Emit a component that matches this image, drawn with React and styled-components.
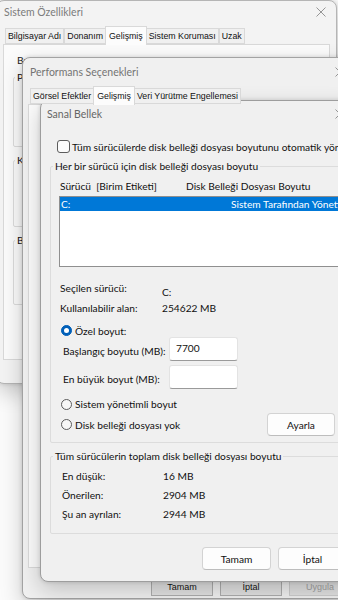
import React from "react";
import styled, { createGlobalStyle } from "styled-components";

const Global = createGlobalStyle`
  html, body { margin: 0; padding: 0; background: #fbfbfb; }
  #root { width: 338px; height: 600px; }
  * { box-sizing: border-box; }
`;

const Desktop = styled.div`
  position: relative;
  width: 338px;
  height: 600px;
  overflow: hidden;
  background: #fbfbfb;
  font-family: "Lato", "Noto Sans", sans-serif;
  font-size: 10.2px;
  color: #111111;
`;

const Window = styled.div`
  position: absolute;
  left: ${(p) => p.$x}px;
  top: ${(p) => p.$y}px;
  width: ${(p) => p.$w}px;
  height: ${(p) => p.$h}px;
  background: ${(p) => p.$bg || "#f0f0f0"};
  border: 1px solid ${(p) => p.$border || "#a9a9a9"};
  border-radius: 8px;
  box-shadow: 0 8px 22px rgba(0, 0, 0, 0.2), 0 0 4px rgba(0, 0, 0, 0.14);
  display: flex;
  flex-direction: column;
  overflow: hidden;
`;

const TitleBar = styled.div`
  flex: none;
  height: ${(p) => p.$h}px;
  display: flex;
  align-items: center;
  justify-content: space-between;
  padding-left: ${(p) => p.$pad}px;
  color: ${(p) => p.$color || "#6f6f6f"};
  font-size: 10.5px;
  line-height: 14px;
`;

const CloseBtn = styled.div`
  width: 30px;
  height: 100%;
  display: flex;
  align-items: center;
  justify-content: center;
  color: #8a8a8a;
`;

const CloseIcon = () => (
  <svg width="10" height="10" viewBox="0 0 10 10">
    <path d="M0.5 0.5 L9.5 9.5 M9.5 0.5 L0.5 9.5" stroke="currentColor" strokeWidth="0.9" fill="none" />
  </svg>
);

/* classic tabs */
const TabStrip = styled.div`
  flex: none;
  display: flex;
  align-items: flex-end;
  height: ${(p) => p.$h}px;
  margin-top: ${(p) => p.$mt}px;
  padding-left: ${(p) => p.$pad}px;
  position: relative;
  z-index: 1;
`;

const Tab = styled.div`
  height: ${(p) => (p.$active ? 19 : 16)}px;
  padding: 0 ${(p) => (p.$active ? 3 : 2)}px;
  margin: 0 ${(p) => (p.$active ? -1 : 0)}px ${(p) => (p.$active ? -1 : 0)}px;
  display: flex;
  align-items: center;
  background: ${(p) => (p.$active ? "#fcfcfc" : "#f0f0f0")};
  border: 1px solid #d9d9d9;
  border-bottom: ${(p) => (p.$active ? "none" : "1px solid #d9d9d9")};
  font-family: "Liberation Sans", Arial, sans-serif;
  font-size: 8.8px;
  color: #111;
  white-space: nowrap;
  position: relative;
  z-index: ${(p) => (p.$active ? 2 : 1)};
`;

const TabPanel = styled.div`
  flex: none;
  height: ${(p) => p.$h}px;
  margin: 0 ${(p) => p.$mx}px;
  background: #fbfbfb;
  border: 1px solid #d9d9d9;
  padding: ${(p) => p.$pad};
  display: flex;
  flex-direction: column;
`;

const Note = styled.div`
  line-height: 14px;
  padding-left: 4px;
  white-space: nowrap;
  color: #222;
`;

const GroupBox = styled.fieldset`
  margin: ${(p) => p.$m || "0"};
  padding: 0;
  border: 1px solid #dcdcdc;
  border-radius: 2px;
  min-width: 0;
  height: ${(p) => (p.$h ? `${p.$h}px` : "auto")};
  display: flex;
  flex-direction: column;
`;

const Legend = styled.legend`
  padding: 0 2px;
  margin-left: ${(p) => p.$indent}px;
  line-height: 14px;
  white-space: nowrap;
  color: #111111;
`;

/* classic push buttons (background window) */
const ClassicRow = styled.div`
  flex: none;
  display: flex;
  justify-content: flex-end;
  gap: 7px;
  margin-top: 10px;
  padding-right: 4px;
`;

const ClassicButton = styled.div`
  width: 62px;
  height: 18px;
  display: flex;
  align-items: center;
  justify-content: center;
  background: #e1e1e1;
  border: 1px solid ${(p) => (p.$disabled ? "#cccccc" : "#adadad")};
  font-family: "Liberation Sans", Arial, sans-serif;
  font-size: 9px;
  color: ${(p) => (p.$disabled ? "#a0a0a0" : "#111")};
`;

/* Sanal Bellek dialog */
const Body = styled.div`
  flex: 1;
  display: flex;
  flex-direction: column;
  padding: 0 8px 11px 9px;
`;

const CheckRow = styled.label`
  display: flex;
  align-items: center;
  gap: 2px;
  height: 13px;
  margin: 13px 0 0 7px;
  white-space: nowrap;
`;

const CheckBox = styled.span`
  flex: none;
  width: 13px;
  height: 13px;
  border: 1px solid #5c5c5c;
  border-radius: 3px;
  background: #fbfbfb;
`;

const HeaderRow = styled.div`
  display: grid;
  grid-template-columns: 126px auto;
  line-height: 14px;
  padding-left: 1px;
  white-space: nowrap;
`;

const ListBox = styled.div`
  height: 71px;
  margin-top: 3px;
  background: #ffffff;
  border: 1px solid #8f8f8f;
  overflow: hidden;
`;

const ListRow = styled.div`
  display: grid;
  grid-template-columns: 170px auto;
  height: 14px;
  line-height: 14px;
  padding-left: 1px;
  background: ${(p) => (p.$selected ? "#0078d7" : "transparent")};
  color: ${(p) => (p.$selected ? "#ffffff" : "#111111")};
  white-space: nowrap;
`;

const InfoRow = styled.div`
  display: grid;
  grid-template-columns: ${(p) => p.$col}px auto;
  margin-top: ${(p) => p.$mt}px;
  padding-left: ${(p) => p.$indent}px;
  line-height: 14px;
  white-space: nowrap;
`;

const Value = styled.span`
  position: relative;
  top: ${(p) => p.$shift || 0}px;
`;

const RadioRow = styled.div`
  display: flex;
  align-items: center;
  gap: 3px;
  height: ${(p) => p.$h || 14}px;
  margin-top: ${(p) => p.$mt}px;
  padding-left: 2px;
  white-space: nowrap;
`;

const Radio = styled.span`
  flex: none;
  width: 11px;
  height: 11px;
  border-radius: 50%;
  background: ${(p) => (p.$on ? "#005fb8" : "#f7f7f7")};
  border: 1px solid ${(p) => (p.$on ? "#005fb8" : "#5c5c5c")};
  display: flex;
  align-items: center;
  justify-content: center;
  &::after {
    content: "";
    width: 5px;
    height: 5px;
    border-radius: 50%;
    background: #ffffff;
    display: ${(p) => (p.$on ? "block" : "none")};
  }
`;

const FieldRow = styled.div`
  display: grid;
  grid-template-columns: 110px 69px;
  align-items: center;
  height: 24px;
  margin-top: ${(p) => p.$mt}px;
`;

const FieldLabel = styled.span`
  padding-left: 4px;
  padding-top: 4px;
  line-height: 14px;
  white-space: nowrap;
`;

const TextInput = styled.input`
  width: 69px;
  height: 24px;
  margin: 0;
  padding: 0 6px 2px;
  background: #ffffff;
  border: 1px solid #e3e3e3;
  border-bottom-color: #9a9a9a;
  border-radius: 3px;
  font-family: inherit;
  font-size: 10.2px;
  color: #111111;
  outline: none;
`;

const SetRow = styled.div`
  display: grid;
  grid-template-columns: 208px 68px;
  align-items: center;
  height: 23px;
  margin-top: 2px;
`;

const Button = styled.div`
  width: ${(p) => p.$w}px;
  height: 23px;
  display: flex;
  align-items: center;
  justify-content: center;
  background: #fdfdfd;
  border: 1px solid #d3d3d3;
  border-bottom-color: #bdbdbd;
  border-radius: 4px;
  color: #111111;
`;

const ButtonRow = styled.div`
  display: flex;
  justify-content: flex-end;
  gap: 7px;
  margin-top: auto;
`;

const GroupContent = styled.div`
  display: flex;
  flex-direction: column;
  padding: ${(p) => p.$pad};
`;

export default function App() {
  return (
    <>
      <Global />
      <Desktop>
        {/* Sistem Özellikleri */}
        <Window $x={-4} $y={0} $w={341} $h={384} $bg="#f3f3f3" $border="#b5b5b5">
          <TitleBar $h={21} $pad={7} $color="#7b7b7b">
            <span>Sistem Özellikleri</span>
            <CloseBtn>
              <CloseIcon />
            </CloseBtn>
          </TitleBar>
          <TabStrip $h={19} $mt={3} $pad={8}>
            <Tab>Bilgisayar Adı</Tab>
            <Tab>Donanım</Tab>
            <Tab $active>Gelişmiş</Tab>
            <Tab>Sistem Koruması</Tab>
            <Tab>Uzak</Tab>
          </TabStrip>
          <TabPanel $h={316} $mx={6} $pad="8px 10px 0 9px">
            <Note>Bu değişikliklerin çoğunu yapabilmek için Yönetici olarak oturum açmalısınız.</Note>
            <GroupBox $m="3px 0 0 0" $h={77}>
              <Legend $indent={1}>Performans</Legend>
            </GroupBox>
            <GroupBox $m="6px 0 0 0" $h={74}>
              <Legend $indent={1}>Kullanıcı Profilleri</Legend>
            </GroupBox>
            <GroupBox $m="6px 0 0 0" $h={72}>
              <Legend $indent={1}>Başlangıç ve Kurtarma</Legend>
            </GroupBox>
          </TabPanel>
        </Window>

        {/* Performans Seçenekleri */}
        <Window $x={22} $y={57} $w={334} $h={542} $border="#a3a3a3">
          <TitleBar $h={28} $pad={7} $color="#747474">
            <span>Performans Seçenekleri</span>
            <CloseBtn>
              <CloseIcon />
            </CloseBtn>
          </TitleBar>
          <TabStrip $h={18} $mt={0} $pad={7}>
            <Tab>Görsel Efektler</Tab>
            <Tab $active>Gelişmiş</Tab>
            <Tab>Veri Yürütme Engellemesi</Tab>
          </TabStrip>
          <TabPanel $h={464} $mx={5} $pad="0" />
          <ClassicRow>
            <ClassicButton>Tamam</ClassicButton>
            <ClassicButton>İptal</ClassicButton>
            <ClassicButton $disabled>Uygula</ClassicButton>
          </ClassicRow>
        </Window>

        {/* Sanal Bellek */}
        <Window $x={40} $y={100} $w={316} $h={482} $border="#9d9d9d">
          <TitleBar $h={26} $pad={6} $color="#666666">
            <span>Sanal Bellek</span>
            <CloseBtn>
              <CloseIcon />
            </CloseBtn>
          </TitleBar>
          <Body>
            <CheckRow>
              <CheckBox />
              <span>Tüm sürücülerde disk belleği dosyası boyutunu otomatik yönet</span>
            </CheckRow>
            <GroupBox $m="6px 0 0 0">
              <Legend $indent={2}>Her bir sürücü için disk belleği dosyası boyutu</Legend>
              <GroupContent $pad="6px 5px 6px 8px">
                <HeaderRow>
                  <span>Sürücü&nbsp;&nbsp;[Birim Etiketi]</span>
                  <span>Disk Belleği Dosyası Boyutu</span>
                </HeaderRow>
                <ListBox>
                  <ListRow $selected>
                    <span>C:</span>
                    <span>Sistem Tarafından Yönetilen</span>
                  </ListRow>
                </ListBox>
                <InfoRow $col={102} $mt={14} $indent={1}>
                  <span>Seçilen sürücü:</span>
                  <Value $shift={4}>C:</Value>
                </InfoRow>
                <InfoRow $col={102} $mt={6} $indent={1}>
                  <span>Kullanılabilir alan:</span>
                  <Value>254622 MB</Value>
                </InfoRow>
                <RadioRow $mt={9} $h={13}>
                  <Radio $on />
                  <span>Özel boyut:</span>
                </RadioRow>
                <FieldRow $mt={0}>
                  <FieldLabel>Başlangıç boyutu (MB):</FieldLabel>
                  <TextInput defaultValue="7700" readOnly />
                </FieldRow>
                <FieldRow $mt={4}>
                  <FieldLabel>En büyük boyut (MB):</FieldLabel>
                  <TextInput defaultValue="" readOnly />
                </FieldRow>
                <RadioRow $mt={8}>
                  <Radio />
                  <span>Sistem yönetimli boyut</span>
                </RadioRow>
                <SetRow>
                  <RadioRow $mt={0}>
                    <Radio />
                    <span>Disk belleği dosyası yok</span>
                  </RadioRow>
                  <Button $w={68}>Ayarla</Button>
                </SetRow>
              </GroupContent>
            </GroupBox>
            <GroupBox $m="6px 0 0 0">
              <Legend $indent={2}>Tüm sürücülerin toplam disk belleği dosyası boyutu</Legend>
              <GroupContent $pad="6px 5px 12px 10px">
                <InfoRow $col={101} $mt={0} $indent={1}>
                  <span>En düşük:</span>
                  <Value>16 MB</Value>
                </InfoRow>
                <InfoRow $col={101} $mt={5} $indent={1}>
                  <span>Önerilen:</span>
                  <Value>2904 MB</Value>
                </InfoRow>
                <InfoRow $col={101} $mt={5} $indent={1}>
                  <span>Şu an ayrılan:</span>
                  <Value>2944 MB</Value>
                </InfoRow>
              </GroupContent>
            </GroupBox>
            <ButtonRow>
              <Button $w={69}>Tamam</Button>
              <Button $w={69}>İptal</Button>
            </ButtonRow>
          </Body>
        </Window>
      </Desktop>
    </>
  );
}
